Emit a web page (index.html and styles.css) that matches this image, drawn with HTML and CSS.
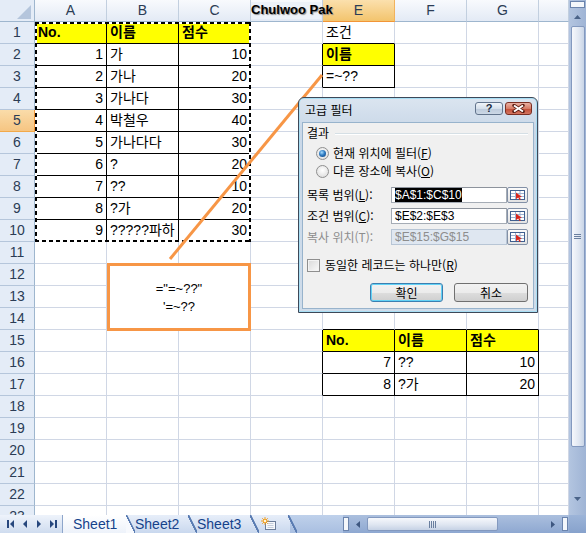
FILE: index.html
```html
<!DOCTYPE html>
<html lang="ko">
<head>
  <meta charset="UTF-8">
  <title>고급 필터</title>
  <link rel="stylesheet" href="styles.css">
</head>
<body>
<div class="app">
  <div class="top">
    <div class="sheet">
      <div class="row hdr">
        <div class="corner"><svg width="35" height="22"><path d="M31 5V19H17Z" fill="#b4c5dc"/></svg></div>
        <div class="ch">A</div><div class="ch">B</div><div class="ch">C</div><div class="ch">D</div><div class="ch sel">E</div><div class="ch">F</div><div class="ch">G</div><div class="ch"></div>
      </div>
      <div class="row"><div class="rh">1</div><div class="c y k">No.</div><div class="c y k">이름</div><div class="c y k">점수</div><div class="c"></div><div class="c bb">조건</div><div class="c"></div><div class="c"></div><div class="c"></div></div>
      <div class="row"><div class="rh">2</div><div class="c n k">1</div><div class="c k">가</div><div class="c n k">10</div><div class="c br"></div><div class="c y k">이름</div><div class="c"></div><div class="c"></div><div class="c"></div></div>
      <div class="row"><div class="rh">3</div><div class="c n k">2</div><div class="c k">가나</div><div class="c n k">20</div><div class="c br"></div><div class="c k">=~??</div><div class="c"></div><div class="c"></div><div class="c"></div></div>
      <div class="row"><div class="rh">4</div><div class="c n k">3</div><div class="c k">가나다</div><div class="c n k">30</div><div class="c"></div><div class="c"></div><div class="c"></div><div class="c"></div><div class="c"></div></div>
      <div class="row"><div class="rh sel">5</div><div class="c n k">4</div><div class="c k">박철우</div><div class="c n k">40</div><div class="c"></div><div class="c"></div><div class="c"></div><div class="c"></div><div class="c"></div></div>
      <div class="row"><div class="rh">6</div><div class="c n k">5</div><div class="c k">가나다다</div><div class="c n k">30</div><div class="c"></div><div class="c"></div><div class="c"></div><div class="c"></div><div class="c"></div></div>
      <div class="row"><div class="rh">7</div><div class="c n k">6</div><div class="c k">?</div><div class="c n k">20</div><div class="c"></div><div class="c"></div><div class="c"></div><div class="c"></div><div class="c"></div></div>
      <div class="row"><div class="rh">8</div><div class="c n k">7</div><div class="c k">??</div><div class="c n k">10</div><div class="c"></div><div class="c"></div><div class="c"></div><div class="c"></div><div class="c"></div></div>
      <div class="row"><div class="rh">9</div><div class="c n k">8</div><div class="c k">?가</div><div class="c n k">20</div><div class="c"></div><div class="c"></div><div class="c"></div><div class="c"></div><div class="c"></div></div>
      <div class="row"><div class="rh">10</div><div class="c n k">9</div><div class="c k">?????파하</div><div class="c n k">30</div><div class="c"></div><div class="c"></div><div class="c"></div><div class="c"></div><div class="c"></div></div>
      <div class="row"><div class="rh">11</div><div class="c"></div><div class="c"></div><div class="c"></div><div class="c"></div><div class="c"></div><div class="c"></div><div class="c"></div><div class="c"></div></div>
      <div class="row"><div class="rh">12</div><div class="c"></div><div class="c"></div><div class="c"></div><div class="c"></div><div class="c"></div><div class="c"></div><div class="c"></div><div class="c"></div></div>
      <div class="row"><div class="rh">13</div><div class="c"></div><div class="c"></div><div class="c"></div><div class="c"></div><div class="c"></div><div class="c"></div><div class="c"></div><div class="c"></div></div>
      <div class="row"><div class="rh">14</div><div class="c"></div><div class="c"></div><div class="c"></div><div class="c"></div><div class="c bb"></div><div class="c bb"></div><div class="c bb"></div><div class="c"></div></div>
      <div class="row"><div class="rh">15</div><div class="c"></div><div class="c"></div><div class="c"></div><div class="c br"></div><div class="c y k">No.</div><div class="c y k">이름</div><div class="c y k">점수</div><div class="c"></div></div>
      <div class="row"><div class="rh">16</div><div class="c"></div><div class="c"></div><div class="c"></div><div class="c br"></div><div class="c n k">7</div><div class="c k">??</div><div class="c n k">10</div><div class="c"></div></div>
      <div class="row"><div class="rh">17</div><div class="c"></div><div class="c"></div><div class="c"></div><div class="c br"></div><div class="c n k">8</div><div class="c k">?가</div><div class="c n k">20</div><div class="c"></div></div>
      <div class="row"><div class="rh">18</div><div class="c"></div><div class="c"></div><div class="c"></div><div class="c"></div><div class="c"></div><div class="c"></div><div class="c"></div><div class="c"></div></div>
      <div class="row"><div class="rh">19</div><div class="c"></div><div class="c"></div><div class="c"></div><div class="c"></div><div class="c"></div><div class="c"></div><div class="c"></div><div class="c"></div></div>
      <div class="row"><div class="rh">20</div><div class="c"></div><div class="c"></div><div class="c"></div><div class="c"></div><div class="c"></div><div class="c"></div><div class="c"></div><div class="c"></div></div>
      <div class="row"><div class="rh">21</div><div class="c"></div><div class="c"></div><div class="c"></div><div class="c"></div><div class="c"></div><div class="c"></div><div class="c"></div><div class="c"></div></div>
      <div class="row"><div class="rh">22</div><div class="c"></div><div class="c"></div><div class="c"></div><div class="c"></div><div class="c"></div><div class="c"></div><div class="c"></div><div class="c"></div></div>
      <div class="row"><div class="rh">23</div><div class="c"></div><div class="c"></div><div class="c"></div><div class="c"></div><div class="c"></div><div class="c"></div><div class="c"></div><div class="c"></div></div>

      <!-- copy marquee around A1:C10 -->
      <div class="ants"></div>

      <svg class="pointer" width="569" height="515"><line x1="170" y1="259" x2="322" y2="75" stroke="#f79646" stroke-width="3"/></svg>
      <div class="note"><div>="=~??"</div><div>'=~??</div></div>

      <div class="sign">Chulwoo Pak</div>

      <div class="dlg">
        <div class="dlg-title">
          <span>고급 필터</span>
          <div class="cap help">?</div>
          <div class="cap close"><svg width="13" height="9"><path d="M2 1.5L11 7.5M11 1.5L2 7.5" stroke="#5a1c12" stroke-width="3.4" stroke-linecap="round"/><path d="M2 1.5L11 7.5M11 1.5L2 7.5" stroke="#fff" stroke-width="2"/></svg></div>
        </div>
        <div class="dlg-body">
          <div class="grp"><span>결과</span><i></i></div>
          <div class="opt"><span class="radio on"></span>현재 위치에 필터(<u>F</u>)</div>
          <div class="opt"><span class="radio"></span>다른 장소에 복사(<u>O</u>)</div>
          <div class="field"><label>목록 범위(<u>L</u>):</label><div class="inp"><span class="hl">$A$1:$C$10</span></div><div class="pick"><svg width="15" height="10"><rect x=".5" y=".5" width="14" height="9" fill="#fff" stroke="#3f5f8f"/><path d="M1 3.5h13M1 6.5h13M5.5 1v8M10 1v8" stroke="#9fb2cf"/><path d="M6 2.5l6 4.5h-2.6l1.4 2.6-1.2.6-1.4-2.6-2.2 1.6z" fill="#d8261c"/></svg></div></div>
          <div class="field"><label>조건 범위(<u>C</u>):</label><div class="inp">$E$2:$E$3</div><div class="pick"><svg width="15" height="10"><rect x=".5" y=".5" width="14" height="9" fill="#fff" stroke="#3f5f8f"/><path d="M1 3.5h13M1 6.5h13M5.5 1v8M10 1v8" stroke="#9fb2cf"/><path d="M6 2.5l6 4.5h-2.6l1.4 2.6-1.2.6-1.4-2.6-2.2 1.6z" fill="#d8261c"/></svg></div></div>
          <div class="field off"><label>복사 위치(T):</label><div class="inp">$E$15:$G$15</div><div class="pick"><svg width="15" height="10"><rect x=".5" y=".5" width="14" height="9" fill="#fff" stroke="#3f5f8f"/><path d="M1 3.5h13M1 6.5h13M5.5 1v8M10 1v8" stroke="#9fb2cf"/><path d="M6 2.5l6 4.5h-2.6l1.4 2.6-1.2.6-1.4-2.6-2.2 1.6z" fill="#d8261c"/></svg></div></div>
          <div class="chk"><span class="box"></span>동일한 레코드는 하나만(<u>R</u>)</div>
          <div class="btns"><div class="btn def">확인</div><div class="btn">취소</div></div>
        </div>
      </div>
    </div>

    <div class="vscroll">
      <div class="vsplit"></div>
      <div class="varr"><svg width="7" height="4"><path d="M0 4L3.5 0L7 4Z" fill="#4a6388"/></svg></div>
      <div class="vthumb"><svg width="7" height="5"><path d="M0 .5h7M0 2.5h7M0 4.5h7" stroke="#6a7f9f"/></svg></div>
      <div class="vspace"></div>
      <div class="varr down"><svg width="7" height="4"><path d="M0 0L3.5 4L7 0Z" fill="#4a6388"/></svg></div>
    </div>
  </div>

  <div class="bottom">
    <div class="nav">
      <svg width="63" height="18"><g fill="#27477d">
        <rect x="7" y="5" width="2" height="8"/><path d="M14 5v8l-4-4z"/>
        <path d="M27 5v8l-4-4z"/>
        <path d="M37 5v8l4-4z"/>
        <path d="M50 5v8l4-4z"/><rect x="55" y="5" width="2" height="8"/>
      </g></svg>
    </div>
    <div class="tab on">Sheet1</div>
    <div class="tab t2">Sheet2</div>
    <div class="tab t3">Sheet3</div>
    <div class="tab new"><svg width="16" height="14"><rect x="4.5" y="4.5" width="10" height="8" fill="#f6f8fb" stroke="#6b7d99"/><path d="M6.5 6.5h6M6.5 8.5h6M6.5 10.5h6" stroke="#c3cddb"/><circle cx="4" cy="4" r="2.2" fill="#f5a623"/><path d="M4 0v8M0 4h8M1.2 1.2l5.6 5.6M6.8 1.2l-5.6 5.6" stroke="#f29b17" stroke-width=".9"/><circle cx="4" cy="4" r="1.3" fill="#fff6d8"/></svg></div>
    <div class="tab fill"></div>
    <div class="hscroll">
      <div class="hsplit"></div>
      <div class="harr"><svg width="4" height="7"><path d="M4 0L0 3.5L4 7Z" fill="#3e5780"/></svg></div>
      <div class="hthumb"><svg width="7" height="7"><path d="M.5 0v7M2.5 0v7M4.5 0v7M6.5 0v7" stroke="#6a7f9f"/></svg></div>
      <div class="htrack"></div>
      <div class="harr"><svg width="4" height="7"><path d="M0 0L4 3.5L0 7Z" fill="#3e5780"/></svg></div>
      <div class="hsplit"></div>
    </div>
    <div class="corner2"></div>
  </div>
</div>
</body>
</html>
```

FILE: styles.css
```css
body { margin: 0; background: #fff; font-family: "Liberation Sans", "Noto Sans CJK KR", sans-serif; }
.app { width: 586px; height: 533px; overflow: hidden; }
.top { display: flex; height: 515px; }

/* grid */
.sheet { position: relative; width: 569px; height: 515px; overflow: hidden; }
.row { display: flex; height: 22px; }
.c {
  flex: none; width: 72px; height: 22px; box-sizing: border-box;
  border-right: 1px solid #d0d7e5; border-bottom: 1px solid #d0d7e5;
  padding: 0 3px; font-size: 14px; line-height: 21px; color: #000;
  white-space: nowrap; overflow: hidden;
}
.c:last-child, .ch:last-child { width: 30px; }
.n { text-align: right; }
.y { background: #ff0; font-weight: bold; }
.k { border-right-color: #000; border-bottom-color: #000; }
.bb { border-bottom-color: #000; }
.br { border-right-color: #000; }

.corner, .rh {
  flex: none; width: 35px; height: 22px; box-sizing: border-box;
  background: #e4ecf7; border-right: 1px solid #9eb6ce; border-bottom: 1px solid #b5c6db;
}
.corner { border-bottom-color: #9eb6ce; }
.corner svg { display: block; }
.rh { text-align: center; font-size: 14px; line-height: 21px; color: #2b3c55; }
.rh.sel { background: linear-gradient(#fadcaa, #f6c582); border-bottom-color: #f2a94a; border-right-color: #f29536; }
.ch {
  flex: none; width: 72px; height: 22px; box-sizing: border-box;
  background: linear-gradient(#f8fafd, #e3eaf5);
  border-right: 1px solid #c2cfdf; border-bottom: 1px solid #9eb6ce;
  text-align: center; font-size: 14px; line-height: 21px; color: #2b3c55;
}
.ch.sel { background: linear-gradient(#fbe0ad, #f3c46d); border-bottom-color: #f29536; border-right-color: #f1b25c; }

.ants { position: absolute; left: 35px; top: 22px; width: 216px; height: 220px; box-sizing: border-box; border: 2px solid #fff; }
.ants::before {
  content: ""; position: absolute; inset: -2px;
  background:
    repeating-linear-gradient(90deg, #000 0 4px, transparent 4px 7px) top / 100% 2px no-repeat,
    repeating-linear-gradient(90deg, #000 0 4px, transparent 4px 7px) bottom / 100% 2px no-repeat,
    repeating-linear-gradient(#000 0 4px, transparent 4px 7px) left / 2px 100% no-repeat,
    repeating-linear-gradient(#000 0 4px, transparent 4px 7px) right / 2px 100% no-repeat;
}

.pointer { position: absolute; left: 0; top: 0; }
.note {
  position: absolute; left: 107px; top: 263px; width: 144px; height: 68px; box-sizing: border-box;
  border: 3px solid #f79646; background: #fff;
  display: flex; flex-direction: column; justify-content: center; align-items: center;
  font-size: 13px; line-height: 18px; padding-top: 1px;
}
.sign {
  position: absolute; left: 251px; top: 2px; padding-top: 1px; height: 16px;
  font: bold 13px/14px "Liberation Sans", sans-serif; color: #000; text-shadow: 1px 1px 1px #8a8a8a;
  background: linear-gradient(90deg, #edf2f9 70px, transparent 70px);
}

/* advanced filter dialog */
.dlg {
  position: absolute; left: 298px; top: 97px; width: 240px; height: 216px; box-sizing: border-box;
  border: 1px solid #3d4858; border-radius: 6px 6px 0 0;
  background: linear-gradient(#dbe5f0, #cad8e8 30px, #cfdcea);
  box-shadow: inset 0 0 0 1px #a8def4;
  padding: 0 3px 3px; display: flex; flex-direction: column;
  font-family: "Noto Sans CJK KR", sans-serif; font-size: 12px; color: #000;
}
.dlg-title { height: 24px; display: flex; align-items: flex-start; flex: none; }
.dlg-title span { padding-left: 3px; line-height: 24px; }
.cap { width: 27px; height: 13px; margin-top: 4px; box-sizing: border-box; border: 1px solid #62748c; border-radius: 3px; display: flex; align-items: center; justify-content: center; }
.help { width: 28px; margin-left: auto; background: linear-gradient(#f1f5fa, #d6e0eb 50%, #bccadb 51%, #ccd8e6); font: bold 11px/11px "Liberation Sans", sans-serif; color: #1c2b3f; }
.close { margin-left: 2px; margin-right: 2px; background: linear-gradient(#eab0a2, #d67b66 50%, #c24b33 51%, #d37661); border-color: #7b2f23; }
.close svg { display: block; }

.dlg-body { flex: 1; background: #f0f0f0; border: 1px solid #98b3cc; padding: 2px 0 0; }
.grp { display: flex; align-items: center; height: 16px; padding-left: 4px; line-height: 16px; }
.grp i { flex: 1; margin: 1px 5px 0 6px; border-top: 1px solid #d5dfe5; border-bottom: 1px solid #fff; }
.opt { display: flex; align-items: center; height: 18px; line-height: 18px; }
.grp + .opt { margin-top: 3px; }
.radio {
  width: 13px; height: 13px; box-sizing: border-box; border-radius: 50%;
  border: 1px solid #8f8f8f; background: radial-gradient(circle at 50% 40%, #fff, #d8d8d8);
  margin: 0 4px 0 13px; display: flex; align-items: center; justify-content: center;
}
.radio.on::after { content: ""; width: 7px; height: 7px; border-radius: 50%; background: radial-gradient(circle at 40% 35%, #a6dcff 0, #2f7cc3 45%, #0c3a74 100%); }

.field { display: flex; height: 16px; margin-top: 5px; }
.opt + .field { margin-top: 7px; }
.field label { width: 88px; box-sizing: border-box; padding-left: 4px; line-height: 16px; }
.inp {
  width: 116px; height: 16px; box-sizing: border-box; border: 1px solid #a5acb5; border-top-color: #8d939c;
  background: #fff; padding-left: 3px; font: 12px/14px "Liberation Sans", sans-serif; white-space: nowrap;
}
.hl { background: #000; color: #fff; }
.field.off label { color: #8d8d8d; }
.field.off .inp { background: #dfe7f1; border-color: #b7c5d5; color: #8d8d8d; }
.pick {
  width: 21px; height: 16px; box-sizing: border-box; border: 1px solid #8290a6; border-radius: 2px;
  background: linear-gradient(#fbfbfb, #e2e2e2); display: flex; align-items: center; justify-content: center;
}
.pick svg { display: block; }

.chk { display: flex; align-items: center; height: 16px; margin-top: 12px; line-height: 16px; }
.box {
  width: 13px; height: 13px; box-sizing: border-box; border: 1px solid #8f8f8f;
  background: linear-gradient(135deg, #d9d9d9, #fafafa); box-shadow: inset 0 0 0 1px #f3f3f3;
  margin: 0 5px 0 4px;
}
.btns { display: flex; justify-content: flex-end; gap: 11px; margin: 10px 5px 0 0; }
.btn {
  width: 74px; height: 19px; box-sizing: border-box; border: 1px solid #707070; border-radius: 3px;
  background: linear-gradient(#f2f2f2, #ebebeb 50%, #dddddd 51%, #cfcfcf);
  text-align: center; line-height: 17px;
}
.btn.def { width: 73px; border-color: #3c7fb1; box-shadow: inset 0 0 0 1px #62d2f6; }

/* vertical scrollbar */
.vscroll { width: 17px; height: 515px; display: flex; flex-direction: column; align-items: center; background: linear-gradient(90deg, #b3c5e0, #9fb4d5); }
.vsplit { width: 15px; height: 7px; margin-top: 1px; box-sizing: border-box; border: 1px solid #6b84ad; background: #f4f7fb; flex: none; }
.varr { height: 17px; display: flex; align-items: center; justify-content: center; flex: none; }
.varr svg, .harr svg { display: block; }
.vthumb {
  width: 14px; height: 421px; margin-top: 1px; box-sizing: border-box; flex: none;
  border: 1px solid #8399bf; border-radius: 2px;
  background: linear-gradient(90deg, #f6f8fc, #dfe6f1 60%, #c9d5e7);
  display: flex; align-items: center; justify-content: center;
}
.vspace { flex: 1; }
.varr.down { margin-bottom: 8px; }

/* sheet tabs */
.bottom { display: flex; height: 18px; }
.nav { width: 63px; flex: none; box-sizing: border-box; background: linear-gradient(#eef3fb, #cfdcef); border-right: 1px solid #8ea6cb; }
.nav svg { display: block; }
.tab {
  position: relative; flex: none; width: 62px; height: 18px; box-sizing: border-box;
  padding-left: 7px; font-size: 14px; line-height: 18px; color: #15428b;
  background: linear-gradient(#e7eef9, #c9d8ee);
}
.tab::before {
  content: ""; position: absolute; left: -2px; top: 0; width: 9px; height: 18px;
  background: linear-gradient(to top right, transparent 44%, #5a7cb2 46%, #5a7cb2 56%, transparent 58%);
}
.tab.on { width: 65px; padding-left: 10px; background: linear-gradient(#fff, #edf2fa); }
.tab.on::before { display: none; }
.tab.t2::before { background: linear-gradient(to top right, #f7f9fd 46%, #5a7cb2 46%, #5a7cb2 56%, transparent 58%); }
.tab.new { width: 38px; padding-left: 9px; }
.tab.new svg { display: block; margin-top: 2px; }
.tab.fill { width: 53px; background: linear-gradient(#bfd1eb, #a9bfe1); }

/* horizontal scrollbar */
.hscroll { width: 226px; flex: none; display: flex; align-items: center; background: linear-gradient(#abbfde, #8ea8d1); }
.hsplit { width: 6px; height: 14px; box-sizing: border-box; border: 1px solid #6b84ad; background: #f4f7fb; flex: none; }
.hsplit:last-child { margin-right: 1px; }
.harr { width: 18px; display: flex; justify-content: center; flex: none; }
.hthumb {
  width: 131px; height: 14px; box-sizing: border-box; flex: none;
  border: 1px solid #8399bf; border-radius: 2px;
  background: linear-gradient(#f6f8fc, #dfe6f1 55%, #c6d2e5);
  display: flex; align-items: center; justify-content: center;
}
.htrack { flex: 1; }
.corner2 { flex: 1; background: linear-gradient(#9cb4d8, #87a2cc); }
```
